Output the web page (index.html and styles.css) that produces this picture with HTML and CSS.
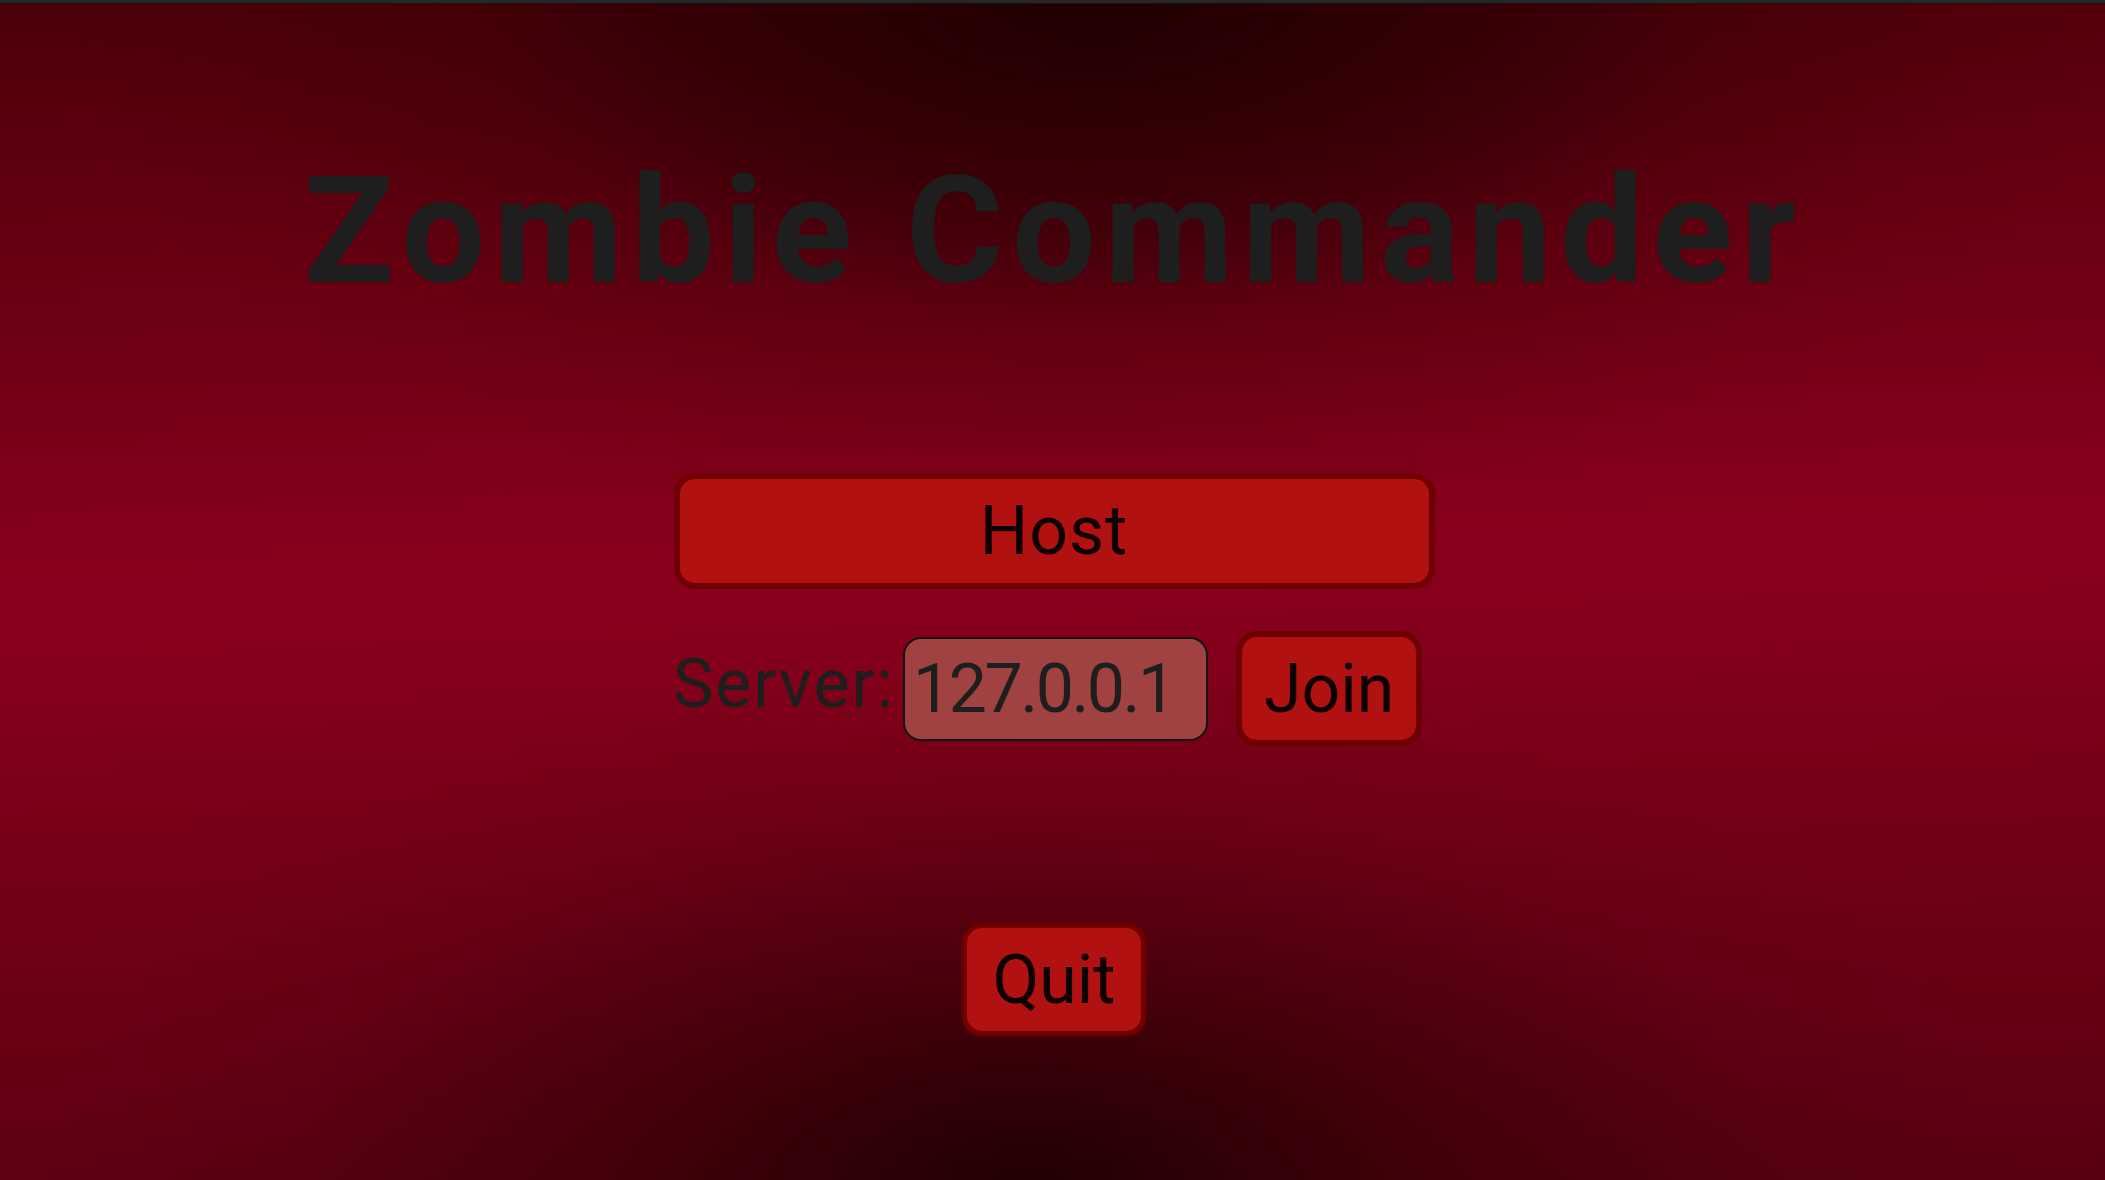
FILE: index.html
```html
<!DOCTYPE html>
<html lang="en">
<head>
<meta charset="utf-8">
<title>Zombie Commander</title>
<link rel="stylesheet" href="styles.css">
</head>
<body>
<div class="screen">
  <div class="topbar"></div>
  <main class="menu">
    <h1 class="title">Zombie Commander</h1>
    <button class="btn btn-host" type="button">Host</button>
    <div class="join-row">
      <label class="server-label" for="server">Server:</label>
      <input class="server-input" id="server" type="text" value="127.0.0.1">
      <button class="btn btn-small" type="button">Join</button>
    </div>
    <button class="btn btn-small btn-quit" type="button">Quit</button>
  </main>
</div>
</body>
</html>
```
FILE: styles.css
```css
html, body {
  margin: 0;
  padding: 0;
  height: 100%;
}

body {
  font-family: Roboto, "Liberation Sans", sans-serif;
  overflow: hidden;
}

.screen {
  position: relative;
  width: 100%;
  height: 100vh;
  display: flex;
  flex-direction: column;
  background:
    radial-gradient(1050px 540px at 52% 0%,
      rgba(26, 0, 0, 0.9) 0%,
      rgba(26, 0, 0, 0.46) 44%,
      rgba(26, 0, 0, 0.2) 60%,
      rgba(26, 0, 0, 0.05) 85%,
      rgba(26, 0, 0, 0) 100%),
    radial-gradient(1000px 520px at 49% 100%,
      rgba(26, 0, 0, 0.88) 0%,
      rgba(26, 0, 0, 0.34) 46%,
      rgba(26, 0, 0, 0.08) 75%,
      rgba(26, 0, 0, 0) 100%),
    linear-gradient(178deg, #4c0008 0%, #8a001c 48%, #580010 100%);
}

.topbar {
  height: 3px;
  background: #262626;
  border-bottom: 1px solid #141414;
  flex: none;
}

.menu {
  display: flex;
  flex-direction: column;
  align-items: center;
  padding-left: 3px;
}

.title {
  margin: 153px 0 0 0;
  font-family: Roboto, "Liberation Sans", sans-serif;
  font-weight: 700;
  font-size: 149px;
  line-height: 1;
  color: #1e1e1e;
  letter-spacing: 8.5px;
}

.btn {
  font-family: Roboto, "Liberation Sans", sans-serif;
  font-size: 68px;
  font-weight: 400;
  color: #0e0000;
  background: #b11111;
  border: 5px solid #700000;
  border-radius: 20px;
  padding: 0;
  line-height: 1;
  box-shadow: 0 0 0 1px rgba(90, 0, 0, 0.6);
  cursor: pointer;
}

.btn-host {
  margin-top: 168px;
  width: 759px;
  height: 114px;
  letter-spacing: 1px;
}

.join-row {
  margin-top: 44px;
  display: flex;
  align-items: center;
  padding-right: 14px;
}

.server-label {
  font-size: 68px;
  line-height: 1;
  color: #1e1e1e;
  margin-right: 8px;
  padding-bottom: 10px;
  letter-spacing: 2px;
}

.server-input {
  width: 305px;
  height: 104px;
  box-sizing: border-box;
  border: 2px solid #141414;
  border-radius: 18px;
  background: #a14242;
  color: #1e1e1e;
  font-family: Roboto, "Liberation Sans", sans-serif;
  font-size: 68px;
  letter-spacing: -2.5px;
  padding: 0 0 0 8px;
  margin-right: 29px;
  outline: none;
}

.btn-small {
  width: 184px;
  height: 113px;
}

.btn-quit {
  margin-top: 178px;
}
```
